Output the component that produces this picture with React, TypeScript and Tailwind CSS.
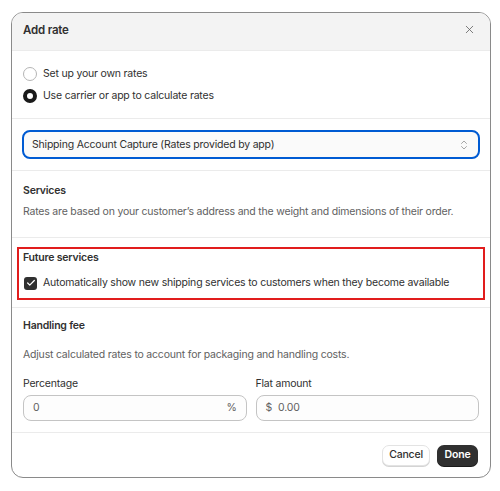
import { X, ChevronsUpDown, Check } from "lucide-react";

function Radio({ checked, label }: { checked?: boolean; label: string }) {
  return (
    <label className="flex items-center gap-[6px] h-[16px]">
      {checked ? (
        <span className="w-[14px] h-[14px] rounded-full border-[4px] border-[#1a1a1a] bg-white" />
      ) : (
        <span className="w-[14px] h-[14px] rounded-full border border-[#b5b5b5] bg-white" />
      )}
      <span>{label}</span>
    </label>
  );
}

export default function App() {
  return (
    <div
      className="w-[500px] h-[491px] bg-white pt-[12px] pl-[11px] text-[10.5px] leading-[14px] tracking-[-0.2px] text-[#303030]"
      style={{ fontFamily: "Inter, 'Noto Sans', sans-serif" }}
    >
      <div className="w-[480px] h-[466px] rounded-[12px] border border-[#8a8a8a] overflow-hidden flex flex-col">
        {/* header */}
        <div className="h-[38px] shrink-0 bg-[#f3f3f3] border-b border-[#ebebeb] flex items-center justify-between pl-[11px] pr-[14px]">
          <h2 className="text-[11.5px] font-semibold text-[#303030] -mt-[4px]">Add rate</h2>
          <X size={13} strokeWidth={1.5} className="text-[#616161] -mt-[4px]" />
        </div>

        {/* rate type */}
        <div className="h-[68px] shrink-0 border-b border-[#ebebeb] flex flex-col justify-center gap-[6px] px-[11px]">
          <Radio label="Set up your own rates" />
          <Radio checked label="Use carrier or app to calculate rates" />
        </div>

        {/* app select */}
        <div className="h-[52px] shrink-0 border-b border-[#ebebeb] flex items-center px-[10px]">
          <div className="w-full h-[29px] rounded-[8px] border-2 border-[#005bd3] bg-[#fafafa] flex items-center justify-between pl-[8px] pr-[8px]">
            <span>Shipping Account Capture (Rates provided by app)</span>
            <ChevronsUpDown size={12} strokeWidth={1.5} className="text-[#8a8a8a]" />
          </div>
        </div>

        {/* services */}
        <div className="h-[67px] shrink-0 border-b border-[#ebebeb] px-[11px] pt-[13px]">
          <h3 className="font-semibold">Services</h3>
          <p className="text-[#616161] mt-[7px]">
            Rates are based on your customer’s address and the weight and dimensions of their order.
          </p>
        </div>

        {/* future services */}
        <div className="h-[70px] shrink-0 border-b border-[#ebebeb] px-[5px] pt-[9px]">
          <div className="w-full h-[53px] border-2 border-[#e11d1d] pl-[4px] pt-[2px]">
            <h3 className="font-semibold">Future services</h3>
            <label className="flex items-center gap-[6px] pl-[1px] h-[16px] mt-[10px]">
              <span className="w-[13px] h-[13px] rounded-[3px] bg-[#303030] flex items-center justify-center">
                <Check size={10} strokeWidth={3} className="text-white" />
              </span>
              <span>Automatically show new shipping services to customers when they become available</span>
            </label>
          </div>
        </div>

        {/* handling fee */}
        <div className="h-[125px] shrink-0 border-b border-[#ebebeb] px-[11px] pt-[11px]">
          <h3 className="font-semibold">Handling fee</h3>
          <p className="text-[#616161] mt-[15px]">Adjust calculated rates to account for packaging and handling costs.</p>
          <div className="grid grid-cols-2 gap-[9px] mt-[15px]">
            <div>
              <div className="mb-[4px]">Percentage</div>
              <div className="h-[26px] rounded-[8px] border border-[#c4c4c4] bg-[#fdfdfd] flex items-center justify-between px-[9px] text-[#616161]">
                <span>0</span>
                <span>%</span>
              </div>
            </div>
            <div>
              <div className="mb-[4px]">Flat amount</div>
              <div className="h-[26px] rounded-[8px] border border-[#c4c4c4] bg-[#fdfdfd] flex items-center gap-[6px] px-[9px] text-[#616161]">
                <span>$</span>
                <span>0.00</span>
              </div>
            </div>
          </div>
        </div>

        {/* footer */}
        <div className="flex-1 flex items-center justify-end gap-[7px] px-[12px]">
          <button className="h-[21px] w-[48px] rounded-[7px] border border-[#e3e3e3] bg-white font-medium text-[#303030] shadow-[0_1px_0_#d4d4d4]">
            Cancel
          </button>
          <button className="h-[21px] w-[41px] rounded-[7px] bg-[#303030] font-semibold text-white shadow-[0_1px_0_#1a1a1a]">
            Done
          </button>
        </div>
      </div>
    </div>
  );
}
